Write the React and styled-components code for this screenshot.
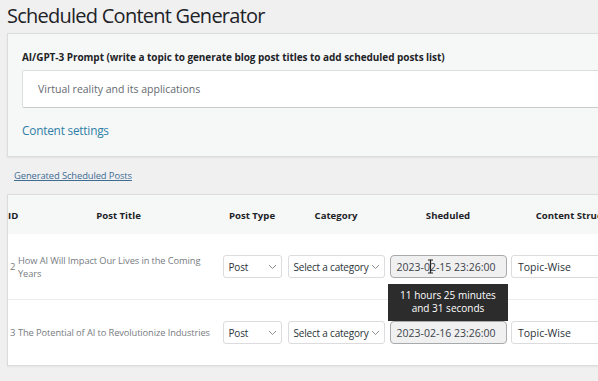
import React from "react";
import styled, { createGlobalStyle } from "styled-components";

const GlobalStyle = createGlobalStyle`
  html, body {
    margin: 0;
    padding: 0;
    background: #f0f0f1;
    font-family: "Open Sans", "Noto Sans", sans-serif;
    color: #1d2327;
  }
  * { box-sizing: border-box; }
`;

const Page = styled.div`
  width: 598px;
  height: 381px;
  overflow: hidden;
  padding-left: 7px;
`;

const Title = styled.h1`
  margin: 0;
  padding-top: 1px;
  font-size: 20px;
  font-weight: 400;
  letter-spacing: -0.75px;
  line-height: 29px;
  color: #1d2327;
  white-space: nowrap;
`;

const SettingsCard = styled.div`
  margin-top: 3px;
  width: 640px;
  height: 124px;
  border: 1px solid #dcdcde;
  background: #f6f7f7;
  box-shadow: 0 1px 2px rgba(0, 0, 0, 0.06);
  padding: 16px 14px 0 14px;
`;

const Label = styled.div`
  font-size: 10px;
  font-weight: 700;
  letter-spacing: -0.05px;
  line-height: 14px;
  white-space: nowrap;
`;

const PromptInput = styled.div`
  margin-top: 6px;
  height: 38px;
  background: #fff;
  border: 1px solid #dcdcde;
  border-bottom-color: #c9cacc;
  border-radius: 2px;
  display: flex;
  align-items: center;
  padding-left: 15px;
  font-size: 10.5px;
  color: #646970;
`;

const SettingsLink = styled.a`
  display: block;
  margin-top: 13px;
  font-size: 11.8px;
  letter-spacing: -0.2px;
  color: #2f7fa6;
  text-decoration: none;
  line-height: 18px;
`;

const LinkBar = styled.div`
  height: 37px;
  padding: 12px 0 0 7px;
  font-size: 9.4px;
  line-height: 14px;
`;

const PostsLink = styled.a`
  letter-spacing: -0.1px;
  color: #3f6d91;
  text-decoration: underline;
`;

const TableCard = styled.div`
  width: 660px;
  border: 1px solid #dcdcde;
  background: #fff;
  box-shadow: 0 1px 2px rgba(0, 0, 0, 0.05);
`;

const Row = styled.div`
  display: grid;
  grid-template-columns: 10px 201px 66px 102px 122px 140px;
  align-items: center;
  height: ${(p) => p.$h}px;
  background: ${(p) => (p.$head ? "#f6f7f7" : "#fff")};
  border-top: ${(p) => (p.$divider ? "1px solid #ececec" : "none")};
`;

const HeadCell = styled.div`
  font-size: 9.6px;
  font-weight: 700;
  text-align: ${(p) => (p.$left ? "left" : "center")};
  white-space: nowrap;
  padding-top: 1px;
`;

const IdCell = styled.div`
  font-size: 9.5px;
  color: #787c82;
  padding-left: 2px;
`;

const TitleCell = styled.div`
  font-size: 9.3px;
  letter-spacing: -0.1px;
  color: #787c82;
  line-height: 13px;
  padding-right: 2px;
`;

const Cell = styled.div`
  position: relative;
  display: flex;
  justify-content: ${(p) => (p.$start ? "flex-start" : "center")};
  padding-left: ${(p) => (p.$start ? "2px" : "0")};
`;

const Select = styled.div`
  width: ${(p) => p.$w}px;
  height: 23px;
  border: 1px solid #dcdcde;
  border-radius: 3px;
  background: #fff;
  display: flex;
  align-items: center;
  justify-content: space-between;
  padding: 0 4px 0 5px;
  font-size: 10px;
  letter-spacing: -0.2px;
  color: #2c3338;
  white-space: nowrap;
`;

const DateInput = styled.div`
  width: 117px;
  height: 23px;
  border: 1px solid #a7aaad;
  border-radius: 4px;
  background: #f0f0f1;
  display: flex;
  align-items: center;
  padding-left: 6px;
  font-size: 10.5px;
  color: #3c434a;
  white-space: nowrap;
`;

const TextInput = styled.div`
  width: 130px;
  height: 23px;
  border: 1px solid #dcdcde;
  border-radius: 3px;
  background: #fff;
  display: flex;
  align-items: center;
  padding-left: 6px;
  font-size: 10.5px;
  color: #2c3338;
`;

const Tooltip = styled.div`
  position: absolute;
  top: 29px;
  left: 1px;
  width: 120px;
  height: 37px;
  background: #2c2c2c;
  color: #fff;
  font-size: 10px;
  line-height: 13px;
  text-align: center;
  padding-top: 5px;
  z-index: 2;
`;

const Cursor = styled.svg`
  position: absolute;
  top: 4px;
  left: 40px;
  z-index: 3;
`;

const Chevron = () => (
  <svg width="9" height="6" viewBox="0 0 9 6">
    <path d="M1 1l3.5 3.5L8 1" fill="none" stroke="#8c8f94" strokeWidth="1" />
  </svg>
);

const posts = [
  {
    id: 2,
    title: "How AI Will Impact Our Lives in the Coming Years",
    date: "2023-02-15 23:26:00",
    tip: true,
  },
  {
    id: 3,
    title: "The Potential of AI to Revolutionize Industries",
    date: "2023-02-16 23:26:00",
  },
];

export default function App() {
  return (
    <Page>
      <GlobalStyle />
      <Title>Scheduled Content Generator</Title>
      <SettingsCard>
        <Label>
          AI/GPT-3 Prompt (write a topic to generate blog post titles to add
          scheduled posts list)
        </Label>
        <PromptInput>Virtual reality and its applications</PromptInput>
        <SettingsLink href="#">Content settings</SettingsLink>
      </SettingsCard>
      <LinkBar>
        <PostsLink href="#">Generated Scheduled Posts</PostsLink>
      </LinkBar>
      <TableCard>
        <Row $head $h={39}>
          <HeadCell $left>ID</HeadCell>
          <HeadCell>Post Title</HeadCell>
          <HeadCell>Post Type</HeadCell>
          <HeadCell>Category</HeadCell>
          <HeadCell>Sheduled</HeadCell>
          <HeadCell>Content Structure</HeadCell>
        </Row>
        {posts.map((p, i) => (
          <Row key={p.id} $h={i === 0 ? 65 : 66} $divider={i > 0}>
            <IdCell>{p.id}</IdCell>
            <TitleCell>{p.title}</TitleCell>
            <Cell>
              <Select $w={59}>
                Post
                <Chevron />
              </Select>
            </Cell>
            <Cell>
              <Select $w={97}>
                Select a category
                <Chevron />
              </Select>
            </Cell>
            <Cell>
              <DateInput>{p.date}</DateInput>
              {p.tip && (
                <>
                  <Cursor width="7" height="15" viewBox="0 0 7 15">
                    <path
                      d="M1 1h2l.5.5L4 1h2M3.5 1.5v12M1 14h2l.5-.5.5.5h2"
                      fill="none"
                      stroke="#222"
                      strokeWidth="1.2"
                    />
                  </Cursor>
                  <Tooltip>
                    11 hours 25 minutes
                    <br />
                    and 31 seconds
                  </Tooltip>
                </>
              )}
            </Cell>
            <Cell $start>
              <TextInput>Topic-Wise</TextInput>
            </Cell>
          </Row>
        ))}
      </TableCard>
    </Page>
  );
}
